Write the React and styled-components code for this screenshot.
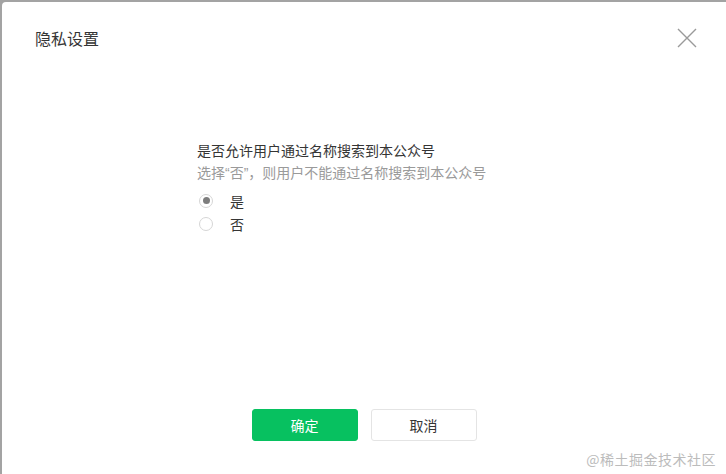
import styled, { createGlobalStyle } from "styled-components";

const GlobalStyle = createGlobalStyle`
    html, body {
        margin: 0;
        padding: 0;
        background: #a3a3a3;
        overflow: hidden;
    }
    body {
        font-family: "Noto Sans CJK SC", "Noto Sans", sans-serif;
    }
`

const Page = styled.div`
    height: 100vh;
    padding: 2px 0 0 2px;
    box-sizing: border-box;
    position: relative;
`,
Dialog = styled.div`
    height: 100%;
    background: #fff;
    border-top-left-radius: 4px;
    display: flex;
    flex-direction: column;
`,
Header = styled.div`
    display: flex;
    align-items: center;
    justify-content: space-between;
    padding: 24px 28px 0 33px;
    height: 24px;
`,
Title = styled.h3`
    margin: 0;
    font-size: 16px;
    font-weight: 400;
    color: #353535;
    line-height: 24px;
`,
CloseBtn = styled.button`
    border: 0;
    background: none;
    padding: 0;
    width: 22px;
    height: 22px;
    display: flex;
    align-items: center;
    justify-content: center;
    cursor: pointer;
`,
Body = styled.div`
    flex: 1;
    padding: 89px 0 0 195px;
`,
Question = styled.p`
    margin: 0;
    font-size: 14px;
    line-height: 22px;
    color: #353535;
`,
Hint = styled.p`
    margin: 0 0 5px;
    font-size: 14px;
    line-height: 22px;
    color: #9a9a9a;
`,
Quote = styled.span`
    font-family: "Liberation Sans", sans-serif;
`,
RadioRow = styled.label`
    display: flex;
    align-items: center;
    height: 23px;
    gap: 17px;
    font-size: 14px;
    color: #353535;
    cursor: pointer;
`,
RadioDot = styled.span`
    width: 12px;
    height: 12px;
    border: 1px solid #d6d6d6;
    border-radius: 50%;
    display: flex;
    align-items: center;
    justify-content: center;
    margin-left: 2px;
    &::after {
        content: "";
        width: 7px;
        height: 7px;
        border-radius: 50%;
        background: ${p => p.$checked ? "#7d7d7d" : "transparent"};
    }
`,
Footer = styled.div`
    display: flex;
    justify-content: center;
    gap: 13px;
    padding-bottom: 33px;
`,
Button = styled.button`
    width: 106px;
    height: 32px;
    border-radius: 3px;
    font-family: inherit;
    font-size: 14px;
    border: 1px solid ${p => p.$primary ? "#07c160" : "#e4e4e4"};
    background: ${p => p.$primary ? "#07c160" : "#fff"};
    color: ${p => p.$primary ? "#fff" : "#353535"};
    cursor: pointer;
`,
Watermark = styled.span`
    position: absolute;
    right: 10px;
    bottom: 5px;
    font-size: 14px;
    color: #bcbcbc;
    letter-spacing: 0.5px;
`

const App = () => {
    const options = ["是", "否"];

    return(
        <>
            <GlobalStyle/>
            <Page>
                <Dialog>
                    <Header>
                        <Title>隐私设置</Title>
                        <CloseBtn aria-label="关闭">
                            <svg width="20" height="20" viewBox="0 0 20 20">
                                <path d="M1 1L19 19M19 1L1 19" stroke="#9a9a9a" strokeWidth="1.4" fill="none"/>
                            </svg>
                        </CloseBtn>
                    </Header>
                    <Body>
                        <Question>是否允许用户通过名称搜索到本公众号</Question>
                        <Hint>选择<Quote>“</Quote>否<Quote>”</Quote>，则用户不能通过名称搜索到本公众号</Hint>
                        {options.map((o, i) => (
                            <RadioRow key={o}>
                                <RadioDot $checked={i === 0}/>
                                {o}
                            </RadioRow>
                        ))}
                    </Body>
                    <Footer>
                        <Button $primary>确定</Button>
                        <Button>取消</Button>
                    </Footer>
                </Dialog>
                <Watermark>@稀土掘金技术社区</Watermark>
            </Page>
        </>
    )
}

export default App;
